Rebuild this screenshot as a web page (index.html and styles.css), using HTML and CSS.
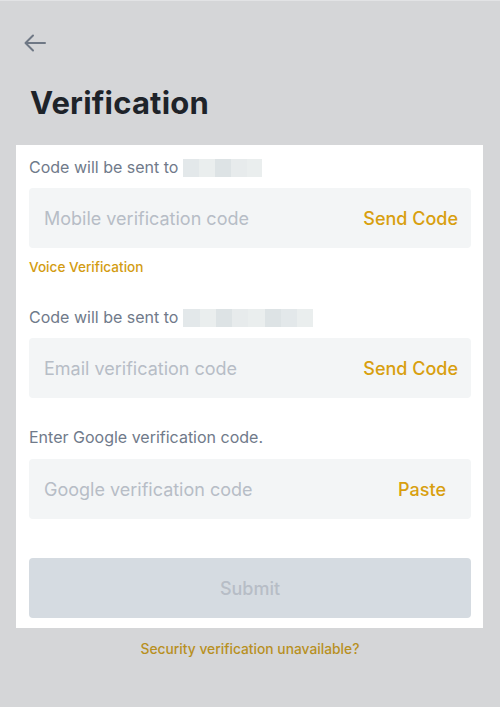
FILE: index.html
```html
<!DOCTYPE html>
<html lang="en">
<head>
<meta charset="utf-8">
<title>Verification</title>
<link rel="stylesheet" href="styles.css">
</head>
<body>
<div class="page">
  <header class="header">
    <button class="back" aria-label="Back">
      <svg width="22" height="18" viewBox="0 0 22 18" fill="none" stroke="#6f7885" stroke-width="2" stroke-linecap="round" stroke-linejoin="round">
        <path d="M21 9H2"/>
        <path d="M9 1.5L1.5 9L9 16.5"/>
      </svg>
    </button>
    <h1 class="title">Verification</h1>
  </header>

  <main class="panel">
    <div class="label">Code will be sent to
      <span class="mask mask-short">
        <span class="cell c1"></span><span class="cell c2"></span><span class="cell c3"></span><span class="cell c4"></span><span class="cell c2"></span>
      </span>
    </div>
    <div class="field">
      <span class="placeholder">Mobile verification code</span>
      <span class="action">Send Code</span>
    </div>
    <div class="voice">Voice Verification</div>

    <div class="label label-second">Code will be sent to
      <span class="mask mask-long">
        <span class="cell c1"></span><span class="cell c2"></span><span class="cell c3"></span><span class="cell c4"></span><span class="cell c2"></span><span class="cell c3"></span><span class="cell c1"></span><span class="cell c2"></span>
      </span>
    </div>
    <div class="field">
      <span class="placeholder">Email verification code</span>
      <span class="action">Send Code</span>
    </div>

    <div class="label label-google">Enter Google verification code.</div>
    <div class="field field-google">
      <span class="placeholder">Google verification code</span>
      <span class="action">Paste</span>
    </div>

    <button class="submit">Submit</button>
  </main>

  <div class="footer-link">Security verification unavailable?</div>
</div>
</body>
</html>
```

FILE: styles.css
```css
* { box-sizing: border-box; }

html, body {
  margin: 0;
  padding: 0;
}

body {
  background: #d5d6d8;
  font-family: Inter, "Noto Sans", "Liberation Sans", sans-serif;
  width: 500px;
  height: 707px;
  overflow: hidden;
}

.page {
  display: flex;
  flex-direction: column;
  border-top: 1px solid #e2e3e5;
}

.header {
  padding: 33px 0 0 24px;
  display: flex;
  flex-direction: column;
}

.back {
  background: none;
  border: 0;
  padding: 0;
  width: 22px;
  height: 18px;
  display: block;
  cursor: pointer;
}

.back svg { display: block; }

.title {
  margin: 31px 0 0 6px;
  font-size: 31px;
  line-height: 40px;
  font-weight: 700;
  color: #1e2329;
  letter-spacing: 0.2px;
  height: 62px;
}

.panel {
  margin: 0 17px 0 16px;
  background: #ffffff;
  padding: 12px 12px 10px 13px;
  display: flex;
  flex-direction: column;
}

.label {
  font-size: 16px;
  line-height: 20px;
  color: #707a8a;
  display: flex;
  align-items: center;
  gap: 5px;
  height: 20px;
}

.label-second { margin-top: 31px; }
.label-google { margin-top: 29px; }

.mask {
  display: flex;
  height: 18px;
  margin-top: 1px;
}
.mask-short { width: 79px; }
.mask-long { width: 130px; }
.cell { flex: 1; height: 100%; }
.c1 { background: #e3e8ea; }
.c2 { background: #eaeeee; }
.c3 { background: #dde3e5; }
.c4 { background: #e7ebec; }

.field {
  margin-top: 11px;
  height: 60px;
  background: #f3f5f6;
  border-radius: 4px;
  display: flex;
  align-items: center;
  justify-content: space-between;
  padding: 0 13px 0 15px;
  font-size: 18px;
}
.field-google {
  margin-top: 12px;
  padding-right: 25px;
}

.placeholder { color: #b7bdc6; }
.action { color: #d89f0f; font-weight: 500; }

.voice {
  margin-top: 10px;
  font-size: 13.6px;
  line-height: 18px;
  color: #d39c12;
  font-weight: 500;
}

.submit {
  margin-top: 39px;
  height: 60px;
  border: 0;
  border-radius: 4px;
  background: #d5dbe1;
  color: #b7bdc6;
  font-family: inherit;
  font-size: 18px;
  font-weight: 500;
  width: 100%;
}

.footer-link {
  margin-top: 12px;
  text-align: center;
  font-size: 13.8px;
  line-height: 18px;
  color: #b8901f;
  font-weight: 500;
}
```
